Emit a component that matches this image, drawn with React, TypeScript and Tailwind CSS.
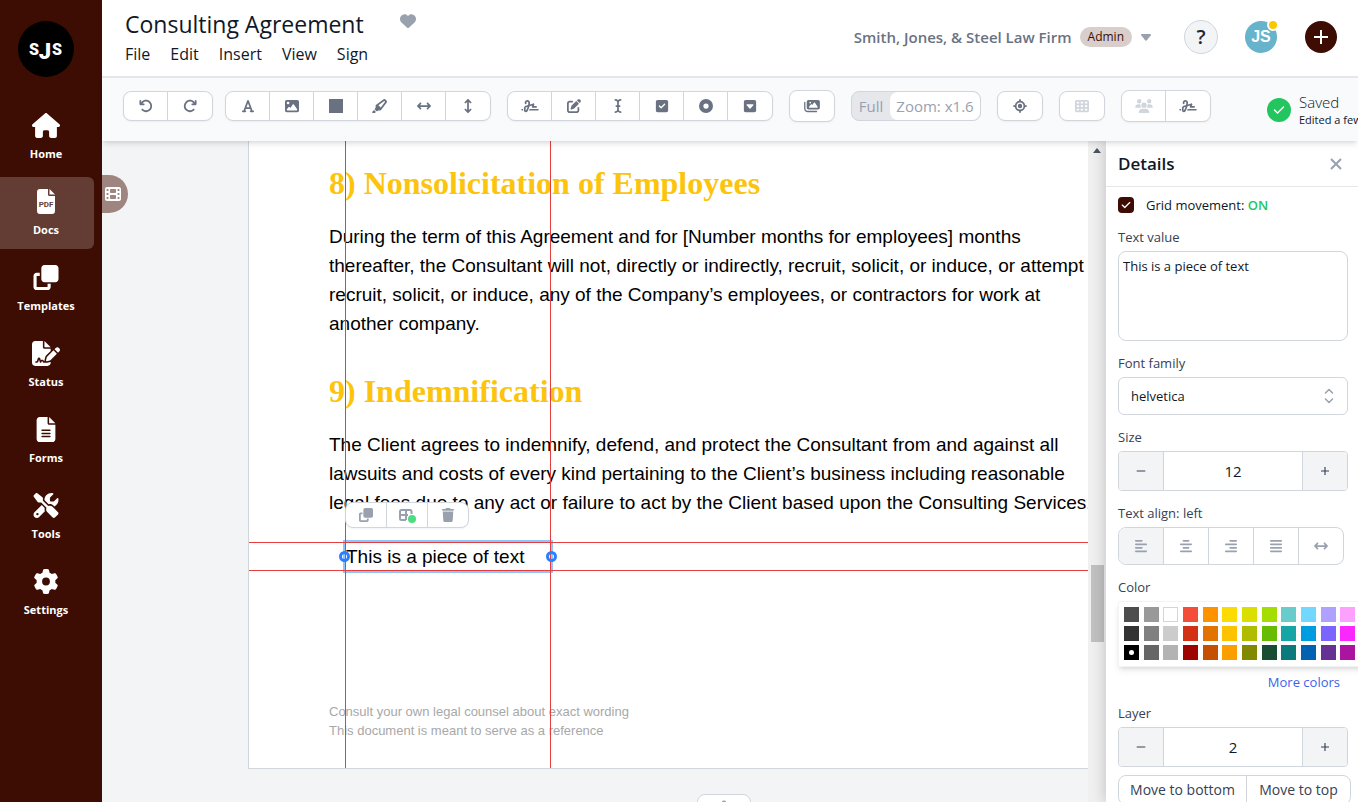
import { useState } from "react";
import type { ReactNode } from "react";
import type { IconType } from "react-icons";
import {
  FaAlignCenter,
  FaAlignJustify,
  FaAlignLeft,
  FaAlignRight,
  FaArrowRotateLeft,
  FaArrowRotateRight,
  FaArrowsLeftRight,
  FaArrowsUpDown,
  FaCheck,
  FaCircleDot,
  FaClone,
  FaEllipsisVertical,
  FaFileLines,
  FaFileSignature,
  FaFilm,
  FaFont,
  FaGear,
  FaHeart,
  FaHighlighter,
  FaHouse,
  FaICursor,
  FaImage,
  FaImages,
  FaLocationCrosshairs,
  FaPenToSquare,
  FaScrewdriverWrench,
  FaSignature,
  FaSquareCaretDown,
  FaSquareCheck,
  FaSquareFull,
  FaTableCells,
  FaTrash,
  FaUsers,
} from "react-icons/fa6";

type Icon = IconType | ((props: { className?: string }) => ReactNode);
type Tool = { label: string; icon: Icon; muted?: boolean };

const NAV: Tool[] = [
  { label: "Home", icon: FaHouse },
  { label: "Docs", icon: PdfIcon },
  { label: "Templates", icon: FaClone },
  { label: "Status", icon: FaFileSignature },
  { label: "Forms", icon: FaFileLines },
  { label: "Tools", icon: FaScrewdriverWrench },
  { label: "Settings", icon: FaGear },
];

const HISTORY: Tool[] = [
  { label: "Undo", icon: FaArrowRotateLeft },
  { label: "Redo", icon: FaArrowRotateRight },
];

const SHAPES: Tool[] = [
  { label: "Text", icon: FaFont },
  { label: "Image", icon: FaImage },
  { label: "Rectangle", icon: FaSquareFull },
  { label: "Highlight", icon: FaHighlighter },
  { label: "Horizontal line", icon: FaArrowsLeftRight },
  { label: "Vertical line", icon: FaArrowsUpDown },
];

const FIELDS: Tool[] = [
  { label: "Signature field", icon: FaSignature },
  { label: "Text area", icon: FaPenToSquare },
  { label: "Text field", icon: FaICursor },
  { label: "Checkbox", icon: FaSquareCheck },
  { label: "Radio", icon: FaCircleDot },
  { label: "Dropdown", icon: FaSquareCaretDown },
];

const SIGNING: Tool[] = [
  { label: "Signers", icon: FaUsers, muted: true },
  { label: "Sign document", icon: FaSignature },
];

const ALIGNMENTS: Tool[] = [
  { label: "left", icon: FaAlignLeft },
  { label: "center", icon: FaAlignCenter },
  { label: "right", icon: FaAlignRight },
  { label: "justify", icon: FaAlignJustify },
  { label: "stretch", icon: FaArrowsLeftRight },
];

const COLORS = [
  "#4D4D4D", "#999999", "#FFFFFF", "#F44E3B", "#FE9200", "#FCDC00",
  "#DBDF00", "#A4DD00", "#68CCCA", "#73D8FF", "#AEA1FF", "#FDA1FF",
  "#333333", "#808080", "#CCCCCC", "#D33115", "#E27300", "#FCC400",
  "#B0BC00", "#68BC00", "#16A5A5", "#009CE0", "#7B64FF", "#FA28FF",
  "#000000", "#666666", "#B3B3B3", "#9F0500", "#C45100", "#FB9E00",
  "#808900", "#194D33", "#0C797D", "#0062B1", "#653294", "#AB149E",
];

export default function App() {
  return (
    <div className="flex h-screen overflow-hidden bg-white font-['Open_Sans','Noto_Sans',sans-serif] text-gray-900">
      <Sidebar />
      <div className="flex min-w-0 flex-1 flex-col">
        <Header />
        <Toolbar />
        <div className="flex min-h-0 flex-1">
          <Canvas />
          <Details />
        </div>
      </div>
    </div>
  );
}

function Sidebar() {
  return (
    <aside className="flex w-[102px] shrink-0 flex-col bg-[#3d0c02] text-white">
      <svg viewBox="0 0 56 56" className="mt-[21px] ml-[18px] size-14" aria-label="SJS">
        <circle cx="28" cy="28" r="28" fill="#000" />
        <g fill="#fff" fontFamily="Roboto, sans-serif" fontWeight="900" textAnchor="middle">
          <text x="16" y="34" fontSize="16">S</text>
          <text x="27" y="38" fontSize="22">J</text>
          <text x="39" y="34" fontSize="16">S</text>
        </g>
      </svg>
      <nav className="mt-6 flex flex-col gap-1">
        {NAV.map(({ label, icon: Icon }) => (
          <a
            key={label}
            href="#"
            className={`flex h-[72px] w-[94px] flex-col items-center gap-2 rounded-r-md pt-3 pr-0.5 text-[11px] leading-4 font-bold ${
              label === "Docs" ? "bg-white/20" : ""
            }`}
          >
            <Icon className="h-[25px] w-7" />
            {label}
          </a>
        ))}
      </nav>
    </aside>
  );
}

function Header() {
  return (
    <header className="flex h-[78px] shrink-0 items-start justify-between border-b-2 border-gray-200 pr-[21px] pl-[23px]">
      <div>
        <div className="flex items-center gap-9 pt-2">
          <h1 className="text-[23px] leading-8">Consulting Agreement</h1>
          <button aria-label="Favourite" className="pb-1.5 text-gray-400">
            <FaHeart className="size-4" />
          </button>
        </div>
        <div className="flex gap-5 text-base leading-7">
          {["File", "Edit", "Insert", "View", "Sign"].map((m) => (
            <button key={m}>{m}</button>
          ))}
        </div>
      </div>
      <div className="flex h-[74px] items-center">
        <button className="flex items-center gap-2 text-[15px] font-semibold text-gray-500">
          Smith, Jones, &amp; Steel Law Firm
          <span className="rounded-full bg-[#d8cecc] px-2 text-xs leading-5 font-medium text-[#3d0c02]">
            Admin
          </span>
          <svg viewBox="0 0 12 8" className="h-[7px] w-3 fill-gray-400">
            <path d="M1.2 0h9.6q1.6 0 .7 1.3L7 7.1q-1 1.1-2 0L.5 1.3Q-.4 0 1.2 0z" />
          </svg>
        </button>
        <button
          aria-label="Help"
          className="ml-8 size-[34px] rounded-full border border-gray-300 bg-gray-100 text-xl leading-none font-semibold text-gray-800"
        >
          ?
        </button>
        <button className="relative ml-[27px] size-8 rounded-full bg-[#67b3cb] font-['Liberation_Sans',sans-serif] text-base leading-none font-bold text-white">
          JS
          <span className="absolute -top-0.5 -right-0.5 size-3 rounded-full border-2 border-white bg-yellow-400" />
        </button>
        <button
          aria-label="Create"
          className="ml-7 flex size-8 items-center justify-center rounded-full bg-[#3d0c02]"
        >
          <PlusIcon className="size-3.5 stroke-white" />
        </button>
      </div>
    </header>
  );
}

function Toolbar() {
  return (
    <div className="relative z-20 flex h-[63px] shrink-0 items-center gap-4 bg-slate-50 pb-[7px] pl-[21px] whitespace-nowrap shadow-md">
      <div className="flex gap-3">
        <ToolGroup tools={HISTORY} />
        <ToolGroup tools={SHAPES} />
      </div>
      <ToolGroup tools={FIELDS} />
      <ToolGroup tools={[{ label: "Gallery", icon: FaImages }]} tall />
      <div className="flex h-[30px] shrink-0 rounded-lg border border-gray-300 bg-gray-200 text-[15px] leading-7 text-gray-400">
        <button className="w-[38px]">Full</button>
        <button className="w-[90px] rounded-lg bg-white">Zoom: x1.6</button>
      </div>
      <ToolGroup tools={[{ label: "Center", icon: FaLocationCrosshairs }]} />
      <ToolGroup tools={[{ label: "Grid", icon: FaTableCells, muted: true }]} />
      <ToolGroup tools={SIGNING} tall />
      <div className="ml-10 flex shrink-0 items-center gap-2 pt-2">
        <span className="flex size-6 items-center justify-center rounded-full bg-[#22c55e] text-white">
          <FaCheck className="size-3" />
        </span>
        <div>
          <div className="text-[15px] leading-5 font-light">Saved</div>
          <div className="text-[11px] leading-4">Edited a few seconds ago</div>
        </div>
      </div>
    </div>
  );
}

function ToolGroup({ tools, tall }: { tools: Tool[]; tall?: boolean }) {
  return (
    <div
      className={`flex shrink-0 divide-x divide-gray-300 rounded-lg border border-gray-300 bg-white shadow-xs ${
        tall ? "h-8" : "h-[30px]"
      }`}
    >
      {tools.map(({ label, icon: Icon, muted }) => (
        <button
          key={label}
          aria-label={label}
          className={`flex w-11 items-center justify-center ${
            muted ? "text-gray-300" : "text-gray-500"
          }`}
        >
          <Icon className="h-3.5 w-[18px]" />
        </button>
      ))}
    </div>
  );
}

function Canvas() {
  return (
    <main className="relative flex min-w-0 flex-1 bg-gray-100">
      <button
        aria-label="Pages"
        className="absolute top-[34px] left-0 z-10 flex h-[38px] w-[26px] items-center rounded-r-full bg-[#9e8580] pl-[3px] text-white"
      >
        <FaFilm className="size-4" />
      </button>
      <div className="min-w-0 flex-1 overflow-hidden pl-[146px]">
        <Page />
        <button
          aria-label="Page actions"
          className="mt-[25px] ml-[449px] flex h-[30px] w-[54px] justify-center rounded-lg border border-gray-300 bg-white pt-1 text-gray-400"
        >
          <FaEllipsisVertical className="size-5" />
        </button>
      </div>
      <div className="flex w-[18px] shrink-0 flex-col items-center bg-[#f0f0f0]">
        <svg viewBox="0 0 8 5" className="mt-[7px] h-[5px] w-2 fill-gray-600">
          <path d="M4 0l4 5H0z" />
        </svg>
        <div className="mt-[412px] h-[77px] w-[13px] bg-[#c1c1c1]" />
      </div>
    </main>
  );
}

function Page() {
  return (
    <article className="relative h-[628px] w-[979px] border-b border-l border-gray-300 bg-white pt-6 pl-20 font-['Liberation_Sans',sans-serif] text-[19px] leading-[29px] whitespace-nowrap text-black">
      <Heading>8) Nonsolicitation of Employees</Heading>
      <p className="mt-[21px] mb-[35px]">
        During the term of this Agreement and for [Number months for employees] months
        <br />
        thereafter, the Consultant will not, directly or indirectly, recruit, solicit, or induce, or attempt to
        <br />
        recruit, solicit, or induce, any of the Company’s employees, or contractors for work at
        <br />
        another company.
      </p>
      <Heading>9) Indemnification</Heading>
      <p className="mt-[21px]">
        The Client agrees to indemnify, defend, and protect the Consultant from and against all
        <br />
        lawsuits and costs of every kind pertaining to the Client’s business including reasonable
        <br />
        legal fees due to any act or failure to act by the Client based upon the Consulting Services.
      </p>
      <p className="mt-[185px] text-[13px] leading-[19px] text-[#a8a8a8]">
        Consult your own legal counsel about exact wording
        <br />
        This document is meant to serve as a reference
      </p>

      {/* selected text element */}
      <div className="absolute top-[399px] left-[94px] h-[33px] w-[210px] border-3 border-blue-300 leading-[27px]">
        This is a piece of text
      </div>
      {/* snap guides */}
      <div className="absolute inset-y-0 left-24 w-px bg-[#e53e3e]" />
      <div className="absolute inset-y-0 left-[301px] w-px bg-[#e53e3e]" />
      <div className="absolute inset-x-0 top-[401px] h-px bg-[#e53e3e]" />
      <div className="absolute inset-x-0 top-[429px] h-px bg-[#e53e3e]" />
      <div className="absolute top-[410px] left-[90px] size-[11px] rounded-full border-3 border-blue-500" />
      <div className="absolute top-[410px] left-[297px] size-[11px] rounded-full border-3 border-blue-500" />

      <div className="absolute top-[361px] left-24 flex h-[26px] divide-x divide-gray-300 rounded-lg border border-gray-300 bg-white text-gray-400 shadow-xs">
        <button aria-label="Duplicate" className="flex w-[41px] items-center justify-center">
          <FaClone className="size-3.5" />
        </button>
        <button aria-label="Snap to grid" className="flex w-[41px] items-center justify-center">
          <svg viewBox="0 0 18 16" className="h-4 w-[18px]" fill="none">
            <path
              d="M8 13H3.500A1.500 1.500 0 0 1 2 11.500v-7A1.500 1.500 0 0 1 3.500 3H12a1.500 1.500 0 0 1 1.500 1.500V7M2 8h8M8 3v10"
              stroke="currentColor"
              strokeWidth="2"
            />
            <circle cx="14" cy="12" r="4" fill="#4ade80" />
          </svg>
        </button>
        <button aria-label="Delete" className="flex w-10 items-center justify-center">
          <FaTrash className="size-3.5" />
        </button>
      </div>
    </article>
  );
}

function Heading({ children }: { children: ReactNode }) {
  return (
    <h2 className="font-['Liberation_Serif',serif] text-[32px] leading-9 font-bold text-[#fcc40c]">
      {children}
    </h2>
  );
}

function Details() {
  const [text, setText] = useState("This is a piece of text");
  const [snap, setSnap] = useState(true);
  const [align, setAlign] = useState("left");
  const [color, setColor] = useState("#000000");

  return (
    <aside className="relative z-10 w-[252px] shrink-0 overflow-hidden bg-white text-sm leading-5 shadow-[0_0_14px_rgba(0,0,0,0.22)]">
      <header className="flex h-[46px] items-center justify-between border-b border-gray-200 pr-4 pl-3">
        <h2 className="text-[17px] font-semibold">Details</h2>
        <button aria-label="Close">
          <svg viewBox="0 0 12 12" className="size-3 stroke-gray-400" strokeWidth="2">
            <path d="M1 1l10 10M11 1L1 11" />
          </svg>
        </button>
      </header>
      <div className="flex flex-col gap-3 pt-2 pr-[10px] pl-3">
        <label className="flex items-center gap-3 text-[13px]">
          <span className="relative size-4">
            <input
              type="checkbox"
              checked={snap}
              onChange={(e) => setSnap(e.target.checked)}
              className="block size-4 appearance-none rounded bg-[#3d0c02]"
            />
            <FaCheck className="pointer-events-none absolute top-[3px] left-[3px] size-2.5 text-white" />
          </span>
          <span>
            Grid movement:{" "}
            <span className="font-semibold text-[#22c55e]">{snap ? "ON" : "OFF"}</span>
          </span>
        </label>

        <Field label="Text value" htmlFor="text-value">
          <textarea
            id="text-value"
            value={text}
            onChange={(e) => setText(e.target.value)}
            className="block h-[90px] w-full resize-none rounded-lg border border-gray-300 px-1 py-1 text-[13px] leading-5"
          />
        </Field>

        <Field label="Font family" htmlFor="font-family">
          <div className="relative">
            <select
              id="font-family"
              className="block h-[38px] w-full appearance-none rounded-md border border-gray-300 bg-white px-3 text-[13px]"
            >
              <option>helvetica</option>
              <option>times</option>
              <option>courier</option>
            </select>
            <svg
              viewBox="0 0 10 16"
              className="pointer-events-none absolute top-[11px] right-[14px] h-4 w-2.5 stroke-gray-400"
              fill="none"
              strokeWidth="1.500"
              strokeLinecap="round"
              strokeLinejoin="round"
            >
              <path d="M1.500 5L5 1.500 8.500 5M1.500 11L5 14.500 8.500 11" />
            </svg>
          </div>
        </Field>

        <Field label="Size" htmlFor="size">
          <Stepper id="size" initial={12} />
        </Field>

        <Field label={`Text align: ${align}`}>
          <div className="flex h-[38px] w-[226px] divide-x divide-gray-300 overflow-hidden rounded-lg border border-gray-300">
            {ALIGNMENTS.map(({ label, icon: Icon }) => (
              <button
                key={label}
                aria-label={label}
                onClick={() => setAlign(label)}
                className={`flex flex-1 items-center justify-center text-gray-400 ${
                  label === align ? "bg-gray-100" : ""
                }`}
              >
                <Icon className="size-3.5" />
              </button>
            ))}
          </div>
        </Field>

        <Field label="Color">
          <div className="w-[248px] rounded-xs border border-gray-100 bg-white px-[5px] pt-[5px] pb-1.5 shadow-md">
            <div className="grid w-[236px] grid-cols-12 gap-y-1">
              {COLORS.map((c) => (
                <button
                  key={c}
                  aria-label={c}
                  onClick={() => setColor(c)}
                  className={`flex size-[15px] items-center justify-center ${
                    c === "#FFFFFF" ? "border border-gray-300" : ""
                  }`}
                  style={{ backgroundColor: c }}
                >
                  {c === color ? <span className="size-[5px] rounded-full bg-white" /> : null}
                </button>
              ))}
            </div>
          </div>
          <a href="#" className="mt-1.5 block pr-2 text-right text-[13px] leading-[18px] text-[#3f5fe8]">
            More colors
          </a>
        </Field>

        <Field label="Layer" htmlFor="layer">
          <Stepper id="layer" initial={2} />
          <div className="mt-2 flex w-[233px] divide-x divide-gray-300 rounded-lg border border-gray-300 text-sm font-medium whitespace-nowrap text-gray-700">
            <button className="h-7 w-32">Move to bottom</button>
            <button className="h-7 flex-1">Move to top</button>
          </div>
        </Field>
      </div>
    </aside>
  );
}

function Field({
  label,
  htmlFor,
  children,
}: {
  label: string;
  htmlFor?: string;
  children: ReactNode;
}) {
  const labelClass = "mb-1 block text-[13px] font-medium text-gray-700";
  return (
    <div>
      {htmlFor ? (
        <label htmlFor={htmlFor} className={labelClass}>
          {label}
        </label>
      ) : (
        <span className={labelClass}>{label}</span>
      )}
      {children}
    </div>
  );
}

function Stepper({ id, initial }: { id: string; initial: number }) {
  const [value, setValue] = useState(initial);
  return (
    <div className="flex h-10 overflow-hidden rounded border border-gray-300">
      <button
        aria-label="Decrease"
        onClick={() => setValue(value - 1)}
        className="flex w-[45px] items-center justify-center border-r border-gray-300 bg-gray-100"
      >
        <svg viewBox="0 0 14 14" className="size-2.5 stroke-gray-700" strokeWidth="1.500">
          <path d="M1 7h12" />
        </svg>
      </button>
      <input
        id={id}
        value={value}
        onChange={(e) => setValue(Number(e.target.value) || 0)}
        className="w-0 min-w-0 flex-1 text-center text-[15px] font-medium"
      />
      <button
        aria-label="Increase"
        onClick={() => setValue(value + 1)}
        className="flex w-[45px] items-center justify-center border-l border-gray-300 bg-gray-100"
      >
        <PlusIcon className="size-2 stroke-gray-700" />
      </button>
    </div>
  );
}

function PlusIcon({ className }: { className: string }) {
  return (
    <svg viewBox="0 0 14 14" className={className} strokeWidth="2">
      <path d="M0 7h14M7 0v14" />
    </svg>
  );
}

function PdfIcon({ className }: { className?: string }) {
  return (
    <svg viewBox="0 0 28 25" className={className} fill="currentColor">
      <path d="M8 0h8v5.500A1.500 1.500 0 0 0 17.500 7H23v15a3 3 0 0 1-3 3H8a3 3 0 0 1-3-3V3a3 3 0 0 1 3-3z" />
      <path d="M17.500 0L23 5.500h-5.500z" />
      <text
        x="14"
        y="18"
        fontSize="8"
        fontWeight="700"
        fontFamily="Roboto, sans-serif"
        textAnchor="middle"
        fill="#643d35"
      >
        PDF
      </text>
    </svg>
  );
}
